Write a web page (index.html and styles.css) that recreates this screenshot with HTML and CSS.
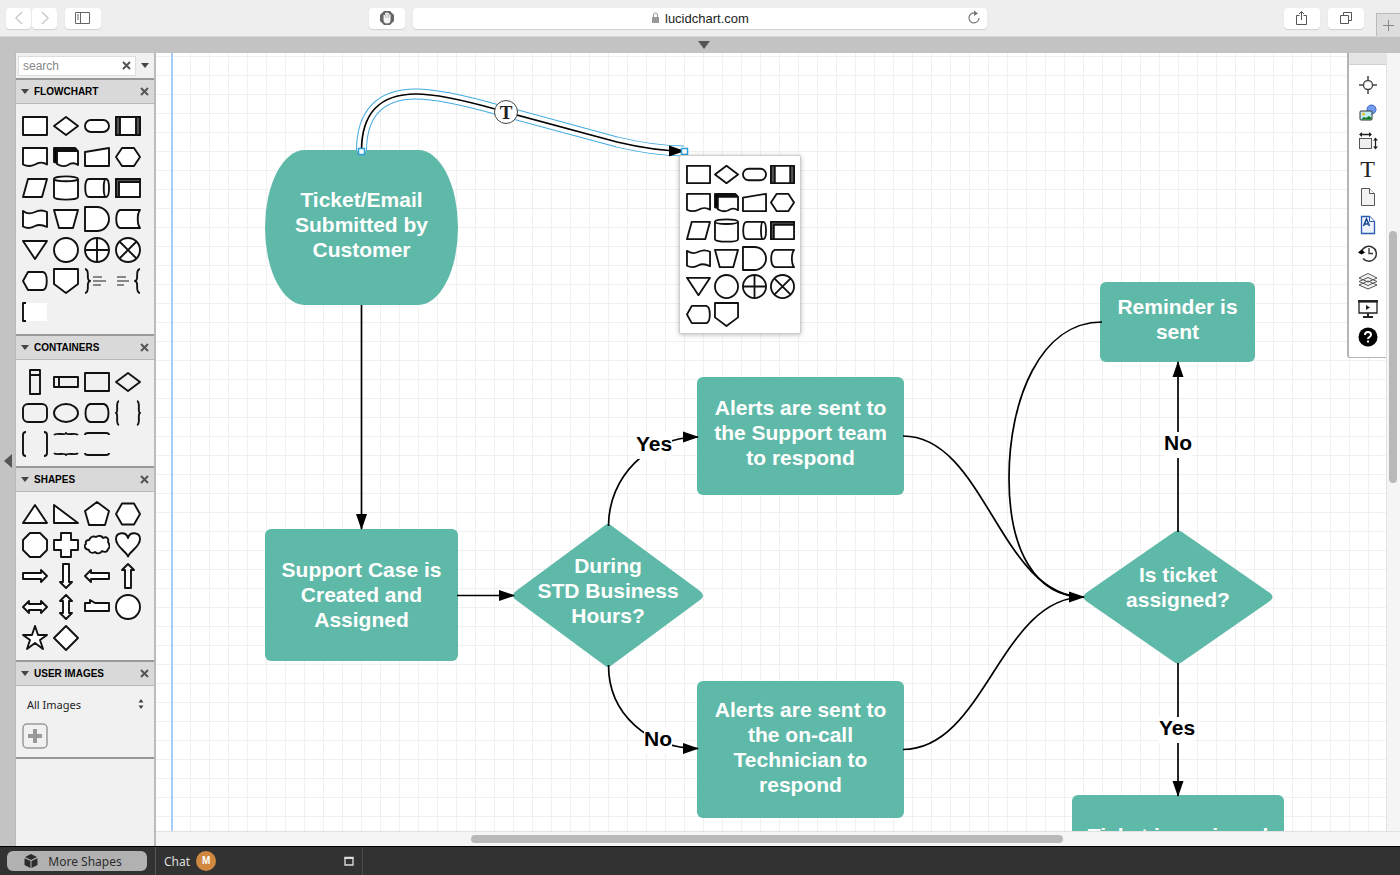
FILE: index.html
```html
<!DOCTYPE html>
<html lang="en">
<head>
<meta charset="utf-8">
<title>Lucidchart</title>
<link rel="stylesheet" href="styles.css">
</head>
<body>
<svg class="sprite" aria-hidden="true">
  <symbol id="rect" viewBox="0 0 26 26"><rect x="1" y="4" width="24" height="18"/></symbol>
  <symbol id="diamond" viewBox="0 0 26 26"><path d="M13 4 25 13 13 22 1 13Z"/></symbol>
  <symbol id="terminator" viewBox="0 0 26 26"><rect x="1" y="7" width="24" height="12" rx="6"/></symbol>
  <symbol id="predefined" viewBox="0 0 26 26"><rect x="1" y="4" width="24" height="18"/><path class="band" d="M1 4h4v18H1ZM21 4h4v18h-4Z"/></symbol>
  <symbol id="document" viewBox="0 0 26 26"><path d="M1 4H25V20.500C22 18.500 17 18 13 20.500 9 22.500 5 22.500 1 20.500Z"/></symbol>
  <symbol id="multidoc" viewBox="0 0 26 26"><path class="solid" d="M1 4H22L24 6H5V19L1 18Z"/><path d="M4 7H25V21C22 19 18 19 15 21 11 23 8 22.500 4 20Z"/></symbol>
  <symbol id="manual-input" viewBox="0 0 26 26"><path d="M1 8 25 4V22H1Z"/></symbol>
  <symbol id="prep" viewBox="0 0 26 26"><path d="M7 4H19L25 13 19 22H7L1 13Z"/></symbol>
  <symbol id="data" viewBox="0 0 26 26"><path d="M6 4H25L20 22H1Z"/></symbol>
  <symbol id="database" viewBox="0 0 26 26"><path d="M1 4C1 .5 25 .5 25 4V22C25 25.500 1 25.500 1 22ZM1 4C1 7 25 7 25 4"/></symbol>
  <symbol id="direct" viewBox="0 0 26 26"><path d="M5 4H22C26 4 26 22 22 22H5C0 22 0 4 5 4ZM22 4C19 4 19 22 22 22"/></symbol>
  <symbol id="internal" viewBox="0 0 26 26"><rect x="1" y="4" width="24" height="18"/><path class="band" d="M1 4H25V7H4V22H1Z"/></symbol>
  <symbol id="tape" viewBox="0 0 26 26"><path d="M1 5C5 8 9 8 13 6 17 4 21 4 25 6V21C21 19 17 18 13 20 9 22.500 5 22.500 1 20.500Z"/></symbol>
  <symbol id="manual-op" viewBox="0 0 26 26"><path d="M1 4H25L20 22H6Z"/></symbol>
  <symbol id="delay" viewBox="0 0 26 26"><path d="M1 1H13A12 12 0 0 1 13 25H1Z"/></symbol>
  <symbol id="stored" viewBox="0 0 26 26"><path d="M5 4H25C22 8 22 18 25 22H5C0 20 0 6 5 4Z"/></symbol>
  <symbol id="merge" viewBox="0 0 26 26"><path d="M1 4H25L13 22Z"/></symbol>
  <symbol id="circle" viewBox="0 0 26 26"><circle cx="13" cy="13" r="12"/></symbol>
  <symbol id="or" viewBox="0 0 26 26"><circle cx="13" cy="13" r="12"/><path d="M13 1V25M1 13H25"/></symbol>
  <symbol id="sum" viewBox="0 0 26 26"><circle cx="13" cy="13" r="12"/><path d="M4.500 4.500 21.500 21.500M21.500 4.500 4.500 21.500"/></symbol>
  <symbol id="display" viewBox="0 0 26 26"><path d="M6 4H21C26 5 26 21 21 22H6L1 13Z"/></symbol>
  <symbol id="offpage" viewBox="0 0 26 26"><path d="M1 1H25V16L13 25 1 16Z"/></symbol>
  <symbol id="note-right" viewBox="0 0 26 26"><path class="line" d="M1 1C7 2 1 12 6 13 1 14 7 24 1 25"/><path class="lines" d="M9 9H18M9 13H22M9 17H17"/></symbol>
  <symbol id="note-left" viewBox="0 0 26 26"><path class="line" d="M25 1C19 2 25 12 20 13 25 14 19 24 25 25"/><path class="lines" d="M2 9H11M2 13H14M2 17H9"/></symbol>
  <symbol id="note" viewBox="0 0 26 26"><path class="paper" d="M1 4H25V22H1Z"/><path class="line" d="M4 4H1V22H4"/></symbol>
  <symbol id="swim-v" viewBox="0 0 26 26"><path d="M8 1H18V25H8ZM8 6H18"/></symbol>
  <symbol id="swim-h" viewBox="0 0 26 26"><path d="M1 8H25V18H1ZM6 8V18"/></symbol>
  <symbol id="round" viewBox="0 0 26 26"><rect x="1" y="4" width="24" height="18" rx="5"/></symbol>
  <symbol id="ellipse" viewBox="0 0 26 26"><ellipse cx="13" cy="13" rx="12" ry="9"/></symbol>
  <symbol id="barrel" viewBox="0 0 26 26"><path d="M6 4H20C26 6 26 20 20 22H6C0 20 0 6 6 4Z"/></symbol>
  <symbol id="braces" viewBox="0 0 26 26"><path class="line" d="M4 1C0 2 4 12 1 13 4 14 0 24 4 25M22 1C26 2 22 12 25 13 22 14 26 24 22 25"/></symbol>
  <symbol id="brackets" viewBox="0 0 26 26"><path class="line" d="M4 1Q1 1 1 4V22Q1 25 4 25M22 1Q25 1 25 4V22Q25 25 22 25"/></symbol>
  <symbol id="braces-h" viewBox="0 0 26 26"><path class="line" d="M1 4C3 1 12 5 13 2 14 5 23 1 25 4M1 22C3 25 12 21 13 24 14 21 23 25 25 22"/></symbol>
  <symbol id="brackets-h" viewBox="0 0 26 26"><path class="line" d="M1 4Q1 2 4 2H22Q25 2 25 4M1 22Q1 24 4 24H22Q25 24 25 22"/></symbol>
  <symbol id="triangle" viewBox="0 0 26 26"><path d="M13 4 25 22H1Z"/></symbol>
  <symbol id="right-tri" viewBox="0 0 26 26"><path d="M1 4 25 22H1Z"/></symbol>
  <symbol id="pentagon" viewBox="0 0 26 26"><path d="M13 1 25 10 21 24H5L1 10Z"/></symbol>
  <symbol id="hexagon" viewBox="0 0 26 26"><path d="M7 2.500H19L25 13 19 23.500H7L1 13Z"/></symbol>
  <symbol id="octagon" viewBox="0 0 26 26"><path d="M8 1H18L25 8V18L18 25H8L1 18V8Z"/></symbol>
  <symbol id="cross" viewBox="0 0 26 26"><path d="M8 1H18V8H25V18H18V25H8V18H1V8H8Z"/></symbol>
  <symbol id="cloud" viewBox="0 0 26 26"><path d="M5 8C7 4 10 4 12 5 15 3 18 4 19 6 23 4 25 7 24 10 26 13 26 16 24 17 23 21 20 20 18 19 16 22 13 22 11 20 8 22 5 20 5 18 0 17 0 13 2 12 1 9 3 8 5 8Z"/></symbol>
  <symbol id="heart" viewBox="0 0 26 26"><path d="M13 24.500C10 18 1 15 1 7 1 0 11 -1 13 6 15 -1 25 0 25 7 25 15 16 18 13 24.500Z"/></symbol>
  <symbol id="arrow-r" viewBox="0 0 26 26"><path d="M1 10H19V7L25 13 19 19V16H1Z"/></symbol>
  <symbol id="arrow-d" viewBox="0 0 26 26"><path d="M10 1V19H7L13 25 19 19H16V1Z"/></symbol>
  <symbol id="arrow-l" viewBox="0 0 26 26"><path d="M25 10H7V7L1 13 7 19V16H25Z"/></symbol>
  <symbol id="arrow-u" viewBox="0 0 26 26"><path d="M10 25V7H7L13 1 19 7H16V25Z"/></symbol>
  <symbol id="arrow-h" viewBox="0 0 26 26"><path d="M1 13 7 7V10H19V7L25 13 19 19V16H7V19Z"/></symbol>
  <symbol id="arrow-v" viewBox="0 0 26 26"><path d="M13 1 19 7H16V19H19L13 25 7 19H10V7H7Z"/></symbol>
  <symbol id="callout" viewBox="0 0 26 26"><path d="M1 9H6V6L11 9H25V17H1Z"/></symbol>
  <symbol id="star" viewBox="0 0 26 26"><path d="M13 1 16 10H25L18 15 21 24 13 18 5 24 8 15 1 10H10Z"/></symbol>
  <symbol id="rhombus" viewBox="0 0 26 26"><path d="M13 1 25 13 13 25 1 13Z"/></symbol>
</svg>

<header class="browser">
  <div class="group nav">
    <button class="chip small" aria-label="Back"><svg width="10" height="14" viewBox="0 0 10 14"><path d="M8 1 2 7l6 6" fill="none" stroke="#ccc" stroke-width="1.500"/></svg></button>
    <button class="chip small" aria-label="Forward"><svg width="10" height="14" viewBox="0 0 10 14"><path d="M2 1l6 6-6 6" fill="none" stroke="#ccc" stroke-width="1.500"/></svg></button>
    <button class="chip gap" aria-label="Show sidebar"><svg width="16" height="14" viewBox="0 0 16 14" fill="none" stroke="#666"><path d="M.5 1.500h14v11H.5zM5.500 1.500v11M2 4h2M2 6h2M2 8h2"/></svg></button>
  </div>
  <div class="group location">
    <button class="chip" aria-label="Block content"><svg width="16" height="16" viewBox="0 0 16 16"><path d="M5 1h6l4 4v6l-4 4H5l-4-4V5z" fill="#666"/><path d="M4.500 8V5H6V3h1.300V2.500h1.400V3H10v1.500h1.500V8v2q0 3.500-3.500 3.500T4.500 9.500z" fill="#f4f4f4"/><path d="M6.500 4v4M8 3.500V8M9.500 4v4" stroke="#999" stroke-width=".5"/></svg></button>
    <div class="address">
      <label class="site"><svg width="9" height="12" viewBox="0 0 9 12"><path d="M1 5h7v6H1z" fill="#999"/><path d="M2.500 5V3a2 2 0 0 1 4 0v2" fill="none" stroke="#999"/></svg><input class="url" type="text" value="lucidchart.com" aria-label="Address"></label>
      <button class="bare" aria-label="Reload"><svg width="14" height="16" viewBox="0 0 14 16"><path d="M8 3A5 5 0 1 0 12 8" fill="none" stroke="#777" stroke-width="1.200"/><path d="M7 .5 11 3.500 7 6z" fill="#777"/></svg></button>
    </div>
  </div>
  <div class="group tools">
    <button class="chip" aria-label="Share"><svg width="14" height="16" viewBox="0 0 14 16" fill="none" stroke="#555"><path d="M4.500 5.500h-3v9h10v-9h-3M6.500 10V1.500M4 4l2.500-2.500L9 4"/></svg></button>
    <button class="chip" aria-label="Show tabs"><svg width="14" height="14" viewBox="0 0 14 14" fill="none" stroke="#555"><path d="M1.500 4.500h8v8h-8zM4.500 4.500v-3h8v8h-3"/></svg></button>
    <button class="new-tab" aria-label="New tab"><svg width="11" height="11" viewBox="0 0 11 11"><path d="M5.500 0v11M0 5.500h11" stroke="#888"/></svg></button>
  </div>
</header>
<div class="strip"><button class="bare" aria-label="Show menus"><svg width="12" height="8" viewBox="0 0 12 8"><path d="M0 0h12L6 8z" fill="#555"/></svg></button></div>

<main class="workspace">
  <div class="gutter"><button class="bare" aria-label="Hide shapes"><svg width="8" height="14" viewBox="0 0 8 14"><path d="M8 0v14L0 7z" fill="#555"/></svg></button></div>
  <aside class="sidebar">
    <div class="search">
      <div class="search-box"><input class="query" type="text" placeholder="search" aria-label="Search shapes"><button class="bare" aria-label="Clear search"><svg class="x"><path d="M1 1l7 7M8 1 1 8"/></svg></button></div>
      <button class="bare" aria-label="Search options"><svg class="caret" viewBox="0 0 8 5"><path d="M0 0h8L4 5z"/></svg></button>
    </div>
    <section>
      <h2 class="head"><svg class="caret" viewBox="0 0 8 5"><path d="M0 0h8L4 5z"/></svg><span class="title">FLOWCHART</span><button class="bare" aria-label="Close Flowchart"><svg class="x"><path d="M1 1l7 7M8 1 1 8"/></svg></button></h2>
      <div class="palette">
        <button class="shape" aria-label="Process"><svg><use href="#rect"/></svg></button>
        <button class="shape" aria-label="Decision"><svg><use href="#diamond"/></svg></button>
        <button class="shape" aria-label="Terminator"><svg><use href="#terminator"/></svg></button>
        <button class="shape" aria-label="Predefined process"><svg><use href="#predefined"/></svg></button>
        <button class="shape" aria-label="Document"><svg><use href="#document"/></svg></button>
        <button class="shape" aria-label="Multiple documents"><svg><use href="#multidoc"/></svg></button>
        <button class="shape" aria-label="Manual input"><svg><use href="#manual-input"/></svg></button>
        <button class="shape" aria-label="Preparation"><svg><use href="#prep"/></svg></button>
        <button class="shape" aria-label="Data"><svg><use href="#data"/></svg></button>
        <button class="shape" aria-label="Database"><svg><use href="#database"/></svg></button>
        <button class="shape" aria-label="Direct data"><svg><use href="#direct"/></svg></button>
        <button class="shape" aria-label="Internal storage"><svg><use href="#internal"/></svg></button>
        <button class="shape" aria-label="Paper tape"><svg><use href="#tape"/></svg></button>
        <button class="shape" aria-label="Manual operation"><svg><use href="#manual-op"/></svg></button>
        <button class="shape" aria-label="Delay"><svg><use href="#delay"/></svg></button>
        <button class="shape" aria-label="Stored data"><svg><use href="#stored"/></svg></button>
        <button class="shape" aria-label="Merge"><svg><use href="#merge"/></svg></button>
        <button class="shape" aria-label="Connector"><svg><use href="#circle"/></svg></button>
        <button class="shape" aria-label="Or"><svg><use href="#or"/></svg></button>
        <button class="shape" aria-label="Summing junction"><svg><use href="#sum"/></svg></button>
        <button class="shape" aria-label="Display"><svg><use href="#display"/></svg></button>
        <button class="shape" aria-label="Off-page link"><svg><use href="#offpage"/></svg></button>
        <button class="shape" aria-label="Right brace note"><svg><use href="#note-right"/></svg></button>
        <button class="shape" aria-label="Left brace note"><svg><use href="#note-left"/></svg></button>
        <button class="shape" aria-label="Note"><svg><use href="#note"/></svg></button>
      </div>
    </section>
    <section>
      <h2 class="head"><svg class="caret" viewBox="0 0 8 5"><path d="M0 0h8L4 5z"/></svg><span class="title">CONTAINERS</span><button class="bare" aria-label="Close Containers"><svg class="x"><path d="M1 1l7 7M8 1 1 8"/></svg></button></h2>
      <div class="palette">
        <button class="shape clear" aria-label="Vertical swim lane"><svg><use href="#swim-v"/></svg></button>
        <button class="shape clear" aria-label="Horizontal swim lane"><svg><use href="#swim-h"/></svg></button>
        <button class="shape clear" aria-label="Rectangle container"><svg><use href="#rect"/></svg></button>
        <button class="shape clear" aria-label="Diamond container"><svg><use href="#diamond"/></svg></button>
        <button class="shape clear" aria-label="Rounded container"><svg><use href="#round"/></svg></button>
        <button class="shape clear" aria-label="Ellipse container"><svg><use href="#ellipse"/></svg></button>
        <button class="shape clear" aria-label="Pill container"><svg><use href="#barrel"/></svg></button>
        <button class="shape clear" aria-label="Braces"><svg><use href="#braces"/></svg></button>
        <button class="shape clear" aria-label="Brackets"><svg><use href="#brackets"/></svg></button>
        <button class="shape clear" aria-label="Horizontal braces"><svg><use href="#braces-h"/></svg></button>
        <button class="shape clear" aria-label="Horizontal brackets"><svg><use href="#brackets-h"/></svg></button>
      </div>
    </section>
    <section>
      <h2 class="head"><svg class="caret" viewBox="0 0 8 5"><path d="M0 0h8L4 5z"/></svg><span class="title">SHAPES</span><button class="bare" aria-label="Close Shapes"><svg class="x"><path d="M1 1l7 7M8 1 1 8"/></svg></button></h2>
      <div class="palette">
        <button class="shape" aria-label="Triangle"><svg><use href="#triangle"/></svg></button>
        <button class="shape" aria-label="Right triangle"><svg><use href="#right-tri"/></svg></button>
        <button class="shape" aria-label="Pentagon"><svg><use href="#pentagon"/></svg></button>
        <button class="shape" aria-label="Hexagon"><svg><use href="#hexagon"/></svg></button>
        <button class="shape" aria-label="Octagon"><svg><use href="#octagon"/></svg></button>
        <button class="shape" aria-label="Cross"><svg><use href="#cross"/></svg></button>
        <button class="shape" aria-label="Cloud"><svg><use href="#cloud"/></svg></button>
        <button class="shape" aria-label="Heart"><svg><use href="#heart"/></svg></button>
        <button class="shape" aria-label="Right arrow"><svg><use href="#arrow-r"/></svg></button>
        <button class="shape" aria-label="Down arrow"><svg><use href="#arrow-d"/></svg></button>
        <button class="shape" aria-label="Left arrow"><svg><use href="#arrow-l"/></svg></button>
        <button class="shape" aria-label="Up arrow"><svg><use href="#arrow-u"/></svg></button>
        <button class="shape" aria-label="Horizontal arrow"><svg><use href="#arrow-h"/></svg></button>
        <button class="shape" aria-label="Vertical arrow"><svg><use href="#arrow-v"/></svg></button>
        <button class="shape" aria-label="Callout"><svg><use href="#callout"/></svg></button>
        <button class="shape" aria-label="Circle"><svg><use href="#circle"/></svg></button>
        <button class="shape" aria-label="Star"><svg><use href="#star"/></svg></button>
        <button class="shape" aria-label="Rhombus"><svg><use href="#rhombus"/></svg></button>
      </div>
    </section>
    <section class="last">
      <h2 class="head"><svg class="caret" viewBox="0 0 8 5"><path d="M0 0h8L4 5z"/></svg><span class="title">USER IMAGES</span><button class="bare" aria-label="Close User Images"><svg class="x"><path d="M1 1l7 7M8 1 1 8"/></svg></button></h2>
      <div class="images">
        <label class="filter"><select class="picker" aria-label="Image folder"><option>All Images</option></select><svg width="6" height="10" viewBox="0 0 6 10"><path d="M3 0l2.500 3.500h-5zM3 10l2.500-3.500h-5z" fill="#444"/></svg></label>
        <button class="bare add" aria-label="Add image"><svg width="26" height="26" viewBox="0 0 26 26"><rect x="1" y="1" width="24" height="24" rx="4" fill="none" stroke="#999" stroke-width="1.500"/><path d="M13 6v14M6 13h14" stroke="#999" stroke-width="4"/></svg></button>
      </div>
    </section>
  </aside>

  <div class="stage">
    <div class="canvas">
      <div class="margin-line"></div>
      <div class="node barrel ticket">Ticket/Email<br>Submitted by<br>Customer</div>
      <div class="node box support">Support Case is<br>Created and<br>Assigned</div>
      <div class="node box alert-team">Alerts are sent to<br>the Support team<br>to respond</div>
      <div class="node box alert-tech">Alerts are sent to<br>the on-call<br>Technician to<br>respond</div>
      <div class="node box reminder">Reminder is<br>sent</div>
      <div class="node box outcome">Ticket is assigned</div>
      <svg class="edges" width="1230" height="778" viewBox="156 53 1230 778">
        <defs>
          <marker id="head" viewBox="0 0 16 12" refX="15" refY="6" markerWidth="16" markerHeight="12" markerUnits="userSpaceOnUse" orient="auto"><path d="M0 0.500 16 6 0 11.500Z"/></marker>
        </defs>
        <g class="decision">
          <path d="M604 526Q608 522 612 526L700 591Q706 595.500 700 600L612 665Q608 669 604 665L516 600Q510 595.500 516 591Z"/>
          <path d="M1174 532Q1178 529 1182 532L1270 593Q1275 597 1270 601L1182 662Q1178 665 1174 662L1086 601Q1081 597 1086 593Z"/>
        </g>
        <g class="wire">
          <path d="M361.500 305V529" marker-end="url(#head)"/>
          <path d="M457 595.500H514" marker-end="url(#head)"/>
          <path d="M608.500 526C608.500 477 648 437 698 437" marker-end="url(#head)"/>
          <path d="M608.500 665C608.500 714 648 748.500 698 748.500" marker-end="url(#head)"/>
          <path d="M903 436C985 436 1000 597 1084 597"/>
          <path d="M903 749.500C985 749.500 1000 597 1084 597"/>
          <path d="M1102 322C1040 322 1009 400 1009 478 1009 550 1035 597 1084 597" marker-end="url(#head)"/>
          <path d="M1178 532V362" marker-end="url(#head)"/>
          <path d="M1178 663V796" marker-end="url(#head)"/>
        </g>
        <g class="active">
          <path class="halo" d="M361.500 151C361.500 113 380 94 416 94 440 94 470 102 495 109L617 142C640 147.500 660 151 684 151"/>
          <path class="core" d="M361.500 151C361.500 113 380 94 416 94 440 94 470 102 495 109L617 142C640 147.500 660 151 684 151"/>
          <path class="live" d="M361.500 151C361.500 113 380 94 416 94 440 94 470 102 495 109L617 142C640 147.500 660 151 684 151" marker-end="url(#head)"/>
          <rect class="handle" x="358.500" y="148.500" width="6" height="6"/>
          <rect class="handle" x="681.500" y="148.500" width="6" height="6"/>
        </g>
      </svg>
      <div class="node plain hours">During<br>STD Business<br>Hours?</div>
      <div class="node plain assigned">Is ticket<br>assigned?</div>
      <div class="tag tag-yes">Yes</div>
      <div class="tag tag-no">No</div>
      <div class="tag tag-unassigned">No</div>
      <div class="tag tag-assigned">Yes</div>
      <button class="text-handle" aria-label="Add line text">T</button>
      <div class="popup">
        <button class="shape" aria-label="Process"><svg><use href="#rect"/></svg></button>
        <button class="shape" aria-label="Decision"><svg><use href="#diamond"/></svg></button>
        <button class="shape" aria-label="Terminator"><svg><use href="#terminator"/></svg></button>
        <button class="shape" aria-label="Predefined process"><svg><use href="#predefined"/></svg></button>
        <button class="shape" aria-label="Document"><svg><use href="#document"/></svg></button>
        <button class="shape" aria-label="Multiple documents"><svg><use href="#multidoc"/></svg></button>
        <button class="shape" aria-label="Manual input"><svg><use href="#manual-input"/></svg></button>
        <button class="shape" aria-label="Preparation"><svg><use href="#prep"/></svg></button>
        <button class="shape" aria-label="Data"><svg><use href="#data"/></svg></button>
        <button class="shape" aria-label="Database"><svg><use href="#database"/></svg></button>
        <button class="shape" aria-label="Direct data"><svg><use href="#direct"/></svg></button>
        <button class="shape" aria-label="Internal storage"><svg><use href="#internal"/></svg></button>
        <button class="shape" aria-label="Paper tape"><svg><use href="#tape"/></svg></button>
        <button class="shape" aria-label="Manual operation"><svg><use href="#manual-op"/></svg></button>
        <button class="shape" aria-label="Delay"><svg><use href="#delay"/></svg></button>
        <button class="shape" aria-label="Stored data"><svg><use href="#stored"/></svg></button>
        <button class="shape" aria-label="Merge"><svg><use href="#merge"/></svg></button>
        <button class="shape" aria-label="Connector"><svg><use href="#circle"/></svg></button>
        <button class="shape" aria-label="Or"><svg><use href="#or"/></svg></button>
        <button class="shape" aria-label="Summing junction"><svg><use href="#sum"/></svg></button>
        <button class="shape" aria-label="Display"><svg><use href="#display"/></svg></button>
        <button class="shape" aria-label="Off-page link"><svg><use href="#offpage"/></svg></button>
      </div>
      <nav class="dock">
        <div class="grip"></div>
        <button class="tool" aria-label="Navigate"><svg viewBox="0 0 20 20" fill="none" stroke="#444"><circle cx="10" cy="10" r="4.500" stroke-width="1.300"/><path d="M10 1v5M10 14v5M1 10h5M14 10h5" stroke-width="1.500"/></svg></button>
        <button class="tool" aria-label="Images"><svg viewBox="0 0 20 20"><circle cx="13.500" cy="6.500" r="4.500" fill="#6f9cf0" stroke="#3f62b8"/><rect x="2" y="8" width="12" height="9" rx="1" fill="#c3ecfb" stroke="#333"/><circle cx="5.500" cy="11" r="1.500" fill="#f2c21b"/><path d="M3 16.500 6 14l2 1 3-2 2.500 2v1.500z" fill="#137a1c"/></svg></button>
        <button class="tool" aria-label="Metrics"><svg viewBox="0 0 20 20"><rect x="1.500" y="7.500" width="12" height="10" fill="#eee" stroke="#555"/><path d="M3 3.500h10M17.500 9v7" stroke="#222" stroke-width="1.300"/><path d="M1 3.500 4 1v5zM14 3.500 11 1v5zM17.500 6.500 15 9.500h5zM17.500 18.500 15 15.500h5z" fill="#222"/></svg></button>
        <button class="tool letter" aria-label="Text">T</button>
        <button class="tool" aria-label="Page settings"><svg viewBox="0 0 20 20"><path d="M3.500 1.500h8l5 5v12h-13z" fill="#f3f3f3" stroke="#555"/><path d="M11.500 1.500v5h5" fill="#fff" stroke="#555"/></svg></button>
        <button class="tool" aria-label="Theme"><svg viewBox="0 0 20 20"><path d="M3.500 1.500h8l5 5v12h-13z" fill="#eef3ff" stroke="#2d5bb0" stroke-width="1.300"/><path d="M11.500 1.500v5h5" fill="#fff" stroke="#2d5bb0"/><path d="M5.500 11 8.500 4l3 7M6.500 9h4" fill="none" stroke="#17458f" stroke-width="1.500"/></svg></button>
        <button class="tool" aria-label="History"><svg viewBox="0 0 20 20"><path d="M3.500 9a7.500 7.500 0 1 1 1.500 6.500" fill="none" stroke="#333" stroke-width="1.500"/><path d="M0 9.500 3.500 6.500 7 9.500 3.500 11.500z"/><path d="M11 5v5.500h4" fill="none" stroke="#333" stroke-width="1.300"/></svg></button>
        <button class="tool" aria-label="Layers"><svg viewBox="0 0 20 20" fill="#f4f4f4" stroke="#555"><path d="M1 14 10 10l9 4-9 4zM1 10.500 10 6.500l9 4-9 4zM1 7 10 2.500 19 7l-9 4z"/></svg></button>
        <button class="tool" aria-label="Presentation"><svg viewBox="0 0 20 20"><path d="M1 2.500h18v11.500H1z" fill="#fff" stroke="#222" stroke-width="1.300"/><path d="M0 1h20v2.500H0zM8 6l4 2.500L8 11zM9 14h2v4H9zM5 17h10v2H5z" fill="#222"/></svg></button>
        <button class="tool" aria-label="Help"><svg viewBox="0 0 20 20"><circle cx="10" cy="10" r="9.500"/><path d="M7 8q0-3 3-3t3 2.500Q13 9 11.500 10 10 11 10 12" fill="none" stroke="#fff" stroke-width="2"/><path d="M9 13.500h2v2H9z" fill="#fff"/></svg></button>
      </nav>
    </div>
    <div class="track vertical"><div class="thumb"></div></div>
    <div class="track horizontal"><div class="thumb"></div></div>
  </div>
</main>

<footer class="footer">
  <div class="more-cell"><button class="more"><svg width="14" height="14" viewBox="0 0 14 14"><path d="M7 0 13 3 7 6 1 3zM.5 4.200 6.500 7v7l-6-3zM13.500 4.200 7.500 7v7l6-3z" fill="#2c2c2c"/></svg>More Shapes</button></div>
  <div class="chat"><span>Chat</span><span class="avatar">M</span><button class="bare expand" aria-label="Expand chat"><svg width="10" height="10" viewBox="0 0 10 10"><path d="M1 1.500h8V9H1z" fill="none" stroke="#ddd" stroke-width="1.300"/><path d="M.5 1h9v2h-9z" fill="#ddd"/></svg></button></div>
</footer>
</body>
</html>
```
FILE: styles.css
```css
* { box-sizing: border-box; }

body {
  margin: 0;
  height: 100vh;
  display: flex;
  flex-direction: column;
  overflow: hidden;
  background: #c3c3c3;
  font-family: "Liberation Sans", Arial, sans-serif;
}

button, input, select { font: inherit; color: inherit; margin: 0; padding: 0; border: 0; background: none; }
svg { display: block; }
.sprite { display: none; }
.bare { display: flex; align-items: center; justify-content: center; }

/* Browser toolbar */
.browser {
  flex: none;
  height: 37px;
  display: grid;
  grid-template-columns: 369fr 618fr 413fr;
  align-items: center;
  background: #eee;
  border-bottom: 1px solid #d8d8d8;
}
.group { display: flex; align-items: center; gap: 8px; }
.nav { padding-left: 6px; gap: 1px; }
.chip {
  flex: none;
  width: 36px;
  height: 21px;
  display: flex;
  align-items: center;
  justify-content: center;
  background: #fff;
  border-radius: 4px;
  box-shadow: 0 1px 1px #d0d0d0;
}
.chip.small { width: 25px; }
.chip.gap { margin-left: 7px; }
.address {
  flex: 1;
  height: 21px;
  display: flex;
  align-items: center;
  padding-right: 6px;
  background: #fff;
  border-radius: 4px;
  box-shadow: 0 1px 1px #d0d0d0;
}
.site { flex: 1; display: flex; align-items: center; justify-content: center; gap: 5px; padding-left: 22px; }
.url { width: 86px; height: 19px; font-size: 13px; color: #222; }
.tools { justify-content: flex-end; align-self: stretch; }
.new-tab {
  align-self: flex-end;
  width: 24px;
  height: 23px;
  margin-left: 4px;
  display: flex;
  align-items: center;
  justify-content: center;
  background: #ddd;
  border: 1px solid #bbb;
  border-width: 1px 0 0 1px;
}
.strip { flex: none; height: 16px; display: flex; align-items: center; justify-content: center; padding-left: 8px; }

/* Shape library */
.workspace { flex: 1; min-height: 0; display: flex; }
.gutter { flex: none; width: 15px; display: flex; align-items: center; justify-content: center; padding-top: 22px; }
.sidebar { flex: none; width: 141px; background: #f1f1f1; border: 1px solid #bbb; border-width: 0 2px 0 1px; }
.search { height: 25px; display: flex; align-items: center; gap: 5px; padding: 0 5px 0 2px; }
.search-box { flex: 1; min-width: 0; height: 20px; display: flex; align-items: center; padding: 0 4px; background: #fff; border: 1px solid #ddd; }
.query { flex: 1; min-width: 0; height: 18px; font-size: 12px; color: #333; }
.query::placeholder { color: #888; opacity: 1; }
.x { flex: none; width: 9px; height: 9px; fill: none; stroke: #555; stroke-width: 2; }
.caret { flex: none; width: 8px; height: 5px; fill: #444; }
.head {
  height: 26px;
  margin: 0;
  display: flex;
  align-items: center;
  gap: 5px;
  padding: 0 5px;
  background: #d9d9d9;
  border-top: 2px solid #999;
  border-bottom: 1px solid #b8b8b8;
  font-size: 10px;
  font-weight: bold;
  color: #000;
}
.title { flex: 1; }
.palette { display: grid; grid-template-columns: repeat(4, 31px); grid-auto-rows: 31px; padding: 6px 0 7px 3px; }
.shape { display: flex; align-items: center; justify-content: center; }
.shape svg { width: 26px; height: 26px; fill: #fff; stroke: #111; stroke-width: 1.9; stroke-linejoin: round; }
.clear svg { fill: none; }
.solid { fill: #000; }
.band { fill: #555; }
.line { fill: none; }
.lines { fill: none; stroke: #888; stroke-width: 2; }
.paper { stroke: none; }
.last { border-bottom: 2px solid #999; }
.images { height: 71px; padding: 9px 10px 0 6px; }
.filter { height: 18px; display: flex; align-items: center; font: 11px "Noto Sans", sans-serif; color: #222; padding-left: 5px; }
.picker { flex: 1; min-width: 0; height: 18px; appearance: none; }
.add { margin-top: 10px; }

/* Drawing area */
.stage { flex: 1; min-width: 0; display: grid; grid-template-columns: 1fr 14px; grid-template-rows: 1fr 15px; }
.canvas {
  position: relative;
  overflow: hidden;
  background-color: #fff;
  background-image: linear-gradient(to right, #f0f0f0 1px, transparent 1px), linear-gradient(to bottom, #f0f0f0 1px, transparent 1px);
  background-size: 19px 19px;
  background-position: 15px 3px;
}
.margin-line { position: absolute; left: 15px; top: 0; bottom: 0; width: 2px; background: #a5cdf8; }
.edges { position: absolute; left: 0; top: 0; }
.decision { fill: #5fb9a8; }
.wire, .live { fill: none; stroke: #000; stroke-width: 1.7; }
#head path { fill: #000; stroke: none; }
.halo { fill: none; stroke: #42a9e0; stroke-width: 11; }
.core { fill: none; stroke: #fff; stroke-width: 9; }
.handle { fill: #fff; stroke: #2c9fdc; stroke-width: 1.5; }
.node {
  position: absolute;
  display: flex;
  align-items: center;
  justify-content: center;
  padding-bottom: 6px;
  background: #5fb9a8;
  color: #fff;
  font-size: 21px;
  line-height: 25px;
  font-weight: bold;
  text-align: center;
  white-space: nowrap;
}
.box { border-radius: 6px; }
.plain { background: none; }
.node.barrel { border-radius: 40px / 78px; }
.ticket { left: 109px; top: 97px; width: 193px; height: 155px; }
.support { left: 109px; top: 476px; width: 193px; height: 132px; padding-bottom: 2px; }
.alert-team { left: 541px; top: 324px; width: 207px; height: 118px; padding-bottom: 8px; }
.alert-tech { left: 541px; top: 628px; width: 207px; height: 137px; }
.reminder { left: 944px; top: 229px; width: 155px; height: 80px; }
.outcome { left: 916px; top: 742px; width: 212px; height: 84px; padding-bottom: 4px; }
.hours { left: 357px; top: 471px; width: 190px; height: 143px; padding-bottom: 10px; }
.assigned { left: 927px; top: 477px; width: 190px; height: 134px; padding-bottom: 20px; }
.tag { position: absolute; height: 26px; background: #fff; font-size: 21px; line-height: 22px; font-weight: bold; color: #000; }
.tag-yes { left: 480px; top: 380px; }
.tag-no { left: 488px; top: 675px; }
.tag-unassigned { left: 1008px; top: 379px; }
.tag-assigned { left: 1003px; top: 664px; }
.text-handle {
  position: absolute;
  left: 338px;
  top: 47px;
  width: 24px;
  height: 24px;
  border: 1px solid #444;
  border-radius: 50%;
  background: #fff;
  font: bold 19px/21px "Liberation Serif", serif;
  color: #222;
  text-align: center;
}
.popup {
  position: absolute;
  left: 523px;
  top: 102px;
  display: grid;
  grid-template-columns: repeat(4, 28px);
  grid-auto-rows: 28px;
  padding: 4px;
  padding-bottom: 5px;
  background: #fff;
  border: 1px solid #ccc;
  border-radius: 2px;
  box-shadow: 0 1px 5px rgba(0, 0, 0, 0.25);
}
.popup .shape svg { width: 25px; height: 25px; }

.dock {
  position: absolute;
  right: 0;
  top: 0;
  width: 39px;
  padding-bottom: 6px;
  background: #fff;
  border: solid #b5b5b5;
  border-width: 0 0 1px 2px;
  border-bottom-left-radius: 3px;
}
.grip { height: 12px; margin-bottom: 6px; background: #e5e5e5; border-bottom: 1px solid #d0d0d0; }
.tool { width: 100%; height: 28px; display: flex; align-items: center; justify-content: center; }
.tool svg { width: 20px; height: 20px; }
.letter { font: 24px/28px "Liberation Serif", serif; color: #222; }

.track { display: grid; background: #f5f5f5; }
.vertical { grid-template-rows: 178fr 252fr 348fr; padding: 0 3px 0 2px; border-left: 1px solid #e2e2e2; }
.horizontal { grid-column: 1 / 3; grid-template-columns: 315fr 592fr 337fr; padding: 3px 0; border-top: 1px solid #e2e2e2; }
.thumb { background: #b9b9b9; border-radius: 4px; }
.vertical .thumb { grid-row: 2; }
.horizontal .thumb { grid-column: 2; }

/* Bottom bar */
.footer {
  flex: none;
  height: 29px;
  display: flex;
  background: #323232;
  border-top: 1px solid #000;
  font-family: "Noto Sans", sans-serif;
  font-size: 12px;
}
.more-cell { width: 156px; display: flex; align-items: center; padding: 0 8px 0 7px; border-right: 1px solid #555; }
.more { flex: 1; height: 20px; display: flex; align-items: center; justify-content: center; gap: 10px; padding-right: 8px; background: #b1b1b1; border-radius: 6px; color: #2c2c2c; }
.chat { width: 207px; display: flex; align-items: center; gap: 6px; padding: 0 8px; border-right: 1px solid #4a4a4a; color: #ddd; }
.avatar { width: 20px; height: 20px; border-radius: 50%; background: #d0873f; color: #fff; font: bold 10px/20px "Liberation Sans", sans-serif; text-align: center; }
.expand { margin-left: auto; }
```
